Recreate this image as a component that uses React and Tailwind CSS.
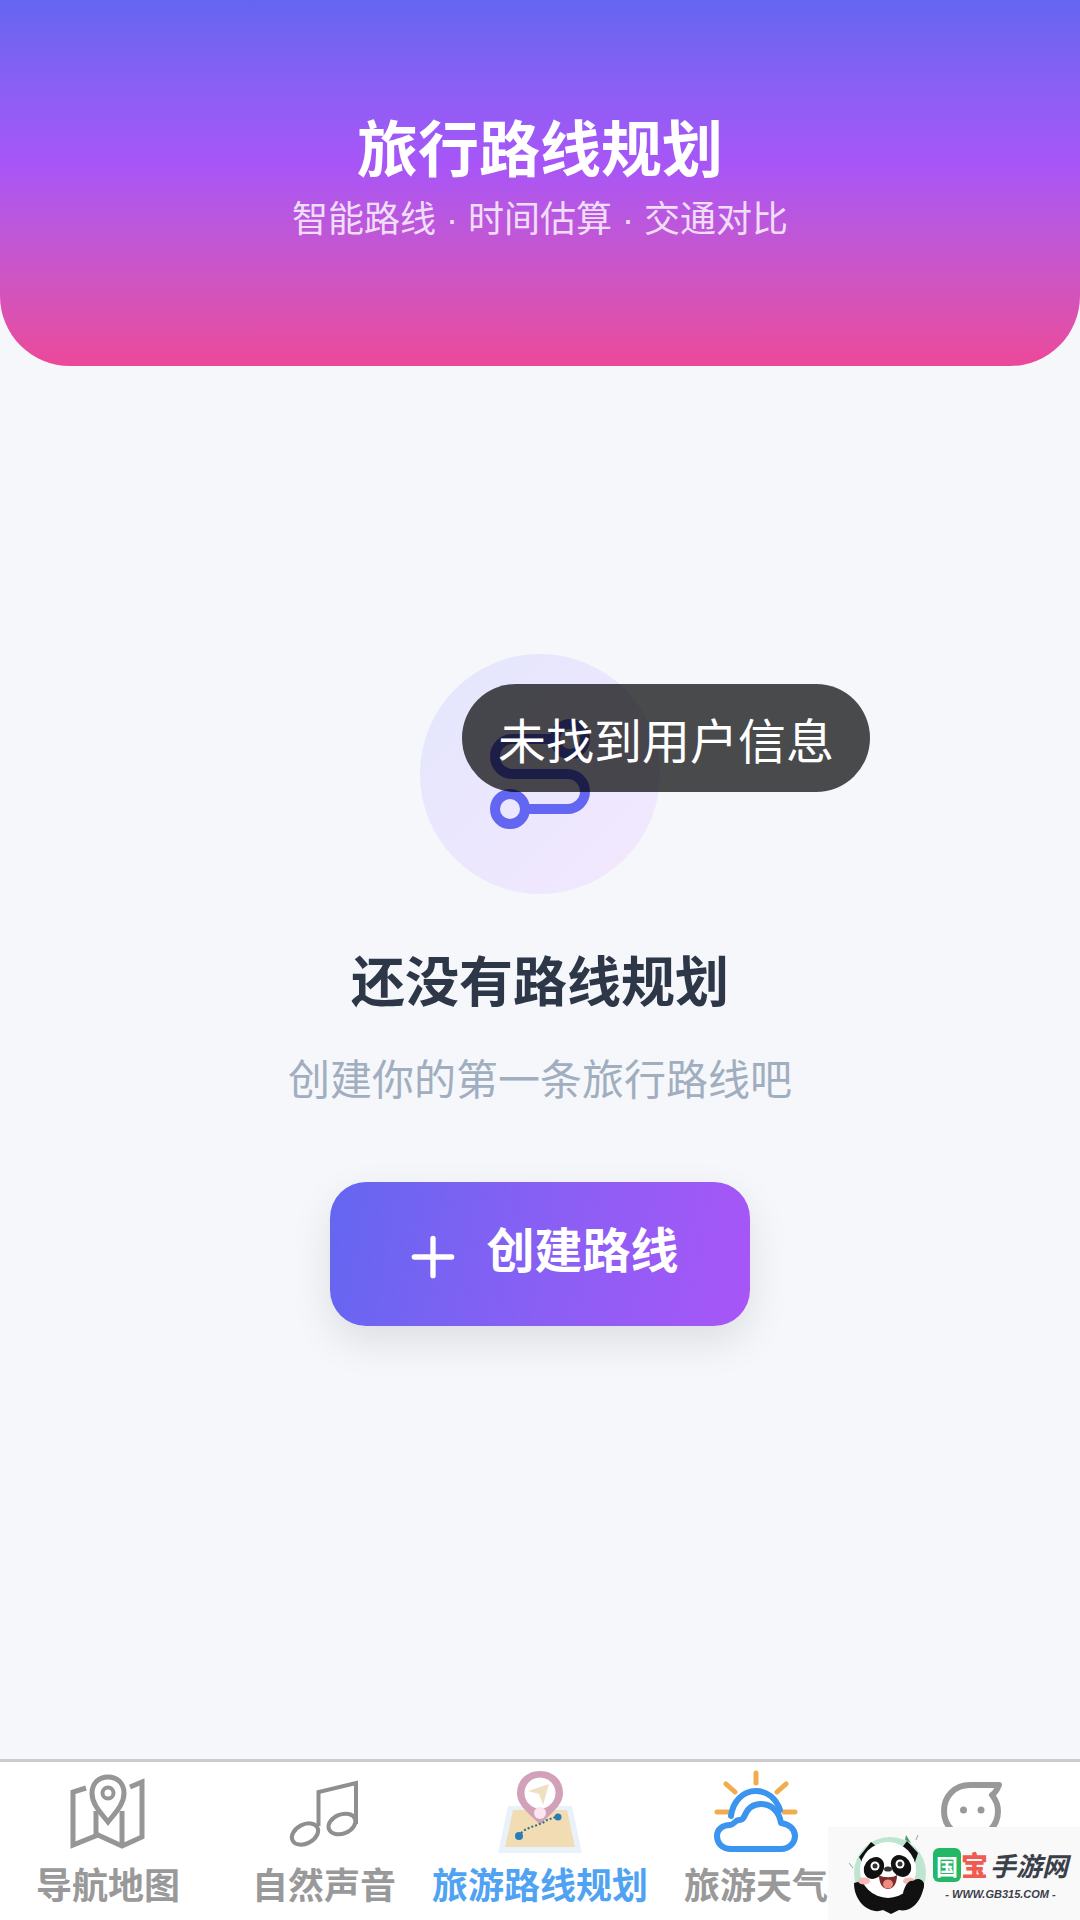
import React from "react";
import { Route, Plus } from "lucide-react";

const MapIcon = () => (
  <svg width="84" height="84" viewBox="0 0 84 84" fill="none" stroke="#969696" strokeWidth="5">
    <path d="M20 18 L7 22 V75 L32 65 L56 76 L76 67 V12 L64 17" />
    <path d="M30 41 V65 M56 41 V76" />
    <path d="M42 52 C34 42 26 34 26 23 C26 13 33 7 42 7 C51 7 58 13 58 23 C58 34 50 42 42 52 Z" />
    <circle cx="42" cy="23" r="5.5" strokeWidth="4" />
  </svg>
);

const MusicIcon = () => (
  <svg width="84" height="84" viewBox="0 0 84 84" fill="none" stroke="#8f8f8f" strokeWidth="4">
    <path d="M36.5 56 V22 L74 13 V54" />
    <ellipse cx="23" cy="64" rx="14" ry="9.5" transform="rotate(-28 23 64)" />
    <ellipse cx="60" cy="54" rx="14" ry="9.5" transform="rotate(-22 60 54)" />
  </svg>
);

const RouteIcon = () => (
  <svg width="84" height="84" viewBox="0 0 84 84" fill="none">
    <path d="M10 36 H74 L84 83 H0 Z" fill="#e9f2fb" />
    <path d="M15 40 H69 L77 77 H7 Z" fill="#f2dcb4" />
    <path d="M42 55 C34 45 19 37 19 23 C19 10 29 1 42 1 C55 1 65 10 65 23 C65 37 50 45 42 55 Z" fill="#d2a0b9" />
    <circle cx="42" cy="23" r="15.5" fill="#ffffff" />
    <path d="M30 21 L51 14 L45 35 L41 24 Z" fill="#efe0c2" />
    <circle cx="42" cy="43" r="6" fill="#fbe6ef" />
    <path d="M23 63 C30 56 42 56 49 50 L58 47" stroke="#2f6f83" strokeWidth="2" strokeDasharray="2 2" />
    <circle cx="21" cy="66" r="4" fill="#2b7eb5" />
    <circle cx="60" cy="47" r="3.5" fill="#2b7eb5" />
  </svg>
);

const WeatherIcon = () => (
  <svg width="84" height="84" viewBox="0 0 84 84" fill="none" strokeLinecap="round">
    <path d="M42 3 V13 M12 14 L21 22 M72 14 L63 22 M3 42 H14 M70 42 H81" stroke="#f0ac4f" strokeWidth="5" />
    <path d="M17 46 C19 31 29 21 42 21 C53 21 62 28 66 40" stroke="#3b94ee" strokeWidth="6" />
    <path d="M17 79 C8 79 3 73 3 66 C3 59 9 55 16 55 C20 55 21 50 25 50 C27 50 28 50 30 47 C33 39 39 34 47 34 C57 34 65 41 67 53 C75 54 81 59 81 66 C81 73 75 79 67 79 Z" stroke="#3b94ee" strokeWidth="6" strokeLinejoin="round" fill="#ffffff" />
  </svg>
);

const ChatIcon = () => (
  <svg width="84" height="84" viewBox="0 0 84 84" fill="none">
    <path d="M14 41 C14 26 25 15 40 15 H69 C67 20 65 23 62 25 C66 30 68 35 68 41 C68 56 56 68 41 68 C26 68 14 56 14 41 Z" stroke="#999999" strokeWidth="6" strokeLinejoin="round" />
    <circle cx="33.5" cy="40" r="3.5" fill="#999999" />
    <circle cx="51" cy="40" r="3.5" fill="#999999" />
  </svg>
);

const PandaLogo = () => (
  <svg width="84" height="84" viewBox="0 0 84 84" fill="none">
    <g transform="translate(0 1)">
      <circle cx="41" cy="40" r="36" fill="#bfe5d0" />
      <path d="M5 50 C5 70 22 82 34 77 L42 81 L50 77 C62 80 74 68 75 50 L42 40 Z" fill="#111111" />
      <path d="M10 24 L22 9 L32 17 L16 34 Z" fill="#111111" />
      <path d="M58 8 L69 20 L65 32 L52 16 Z" fill="#111111" />
      <ellipse cx="39" cy="37" rx="28" ry="28" fill="#ffffff" />
      <ellipse cx="25" cy="35" rx="9.5" ry="11.5" transform="rotate(35 25 35)" fill="#111111" />
      <ellipse cx="52" cy="33" rx="9.5" ry="11.5" transform="rotate(-35 52 33)" fill="#111111" />
      <circle cx="26" cy="33" r="4.5" fill="#ffffff" />
      <circle cx="51" cy="31" r="4.5" fill="#ffffff" />
      <circle cx="26" cy="33" r="2.5" fill="#333333" />
      <circle cx="51" cy="31" r="2.5" fill="#333333" />
      <ellipse cx="39" cy="36" rx="4" ry="2.6" fill="#333333" />
      <path d="M30 42 C34 45 44 45 48 42 C48 51 44 56 39 56 C34 56 30 51 30 42 Z" fill="#7a2b2b" />
      <ellipse cx="39" cy="51" rx="5" ry="4.5" fill="#f08a80" />
      <ellipse cx="15" cy="48" rx="6" ry="3.5" fill="#f7b9b4" />
      <ellipse cx="60" cy="48" rx="6" ry="3.5" fill="#f7b9b4" />
      <path d="M54 60 C56 52 60 47 64 48 C68 44 75 46 75 52 C75 60 66 68 58 66 Z" fill="#111111" />
      <path d="M57 2 L62 10 L56 7 Z" fill="#4e9b6d" />
      <path d="M0 30 L4 35 M69 2 L67 7" stroke="#7fb596" strokeWidth="1" />
    </g>
  </svg>
);

const Tab = ({ icon, label, active }) => (
  <div className="w-[216px] flex flex-col items-center">
    {icon}
    <span className={`h-[54px] mt-[2px] text-[36px] leading-[54px] font-bold whitespace-nowrap ${active ? "text-[#4fa3f2]" : "text-[#999999]"}`}>
      {label}
    </span>
  </div>
);

export default function App() {
  return (
    <div
      className="relative w-[1080px] h-[1920px] overflow-hidden flex flex-col bg-[#f5f7fb]"
      style={{ fontFamily: '"Noto Sans CJK SC", "Noto Sans", sans-serif' }}
    >
      <header className="h-[366px] shrink-0 rounded-b-[70px] bg-linear-to-b from-[#6366f1] via-[#a855f7] via-45% to-[#ec4899] flex flex-col items-center pt-[108px] text-white">
        <h1 className="text-[61px] leading-[76px] font-bold">旅行路线规划</h1>
        <p
          className="text-[36px] leading-[54px] mt-[9px] opacity-80"
          style={{ fontFamily: '"Liberation Sans", "Noto Sans CJK SC", sans-serif' }}
        >
          智能路线 · 时间估算 · 交通对比
        </p>
      </header>

      <main className="flex-1 flex flex-col items-center pt-[288px]">
        <div className="w-[240px] h-[240px] rounded-full bg-linear-to-br from-[#e3e6fd] to-[#f3e8fe] flex items-center justify-center">
          <Route size={120} strokeWidth={2} color="#6366f1" />
        </div>
        <h2 className="mt-[45px] text-[54px] leading-[80px] font-bold text-[#2d3748]">还没有路线规划</h2>
        <p className="mt-[28px] text-[42px] leading-[60px] text-[#a0aec0]">创建你的第一条旅行路线吧</p>
        <button className="mt-[75px] w-[420px] h-[144px] rounded-[36px] bg-linear-100 from-[#6366f1] to-[#a855f7] shadow-[0_16px_40px_rgba(0,0,0,0.1)] flex items-center justify-center text-white">
          <Plus size={64} strokeWidth={2} className="mr-[21px] mt-[6px]" />
          <span className="text-[48px] leading-[60px] font-bold -mt-[14px]">创建路线</span>
        </button>
      </main>

      <nav className="h-[161px] shrink-0 border-t-[3px] border-[#cccccc] bg-white flex pt-[8px]">
        <Tab icon={<MapIcon />} label="导航地图" />
        <Tab icon={<MusicIcon />} label="自然声音" />
        <Tab icon={<RouteIcon />} label="旅游路线规划" active />
        <Tab icon={<WeatherIcon />} label="旅游天气" />
        <Tab icon={<ChatIcon />} label="" />
      </nav>

      <div className="absolute right-0 bottom-0 w-[252px] h-[93px] bg-[#f9f9f9] flex items-center pl-[21px]">
        <PandaLogo />
        <div className="flex flex-col items-center">
          <div className="flex items-center h-[40px]">
            <span className="w-[28px] h-[34px] rounded-[6px] bg-[#22b866] text-white text-[22px] leading-[34px] font-bold text-center">国</span>
            <span className="w-[27px] text-[#f05a4f] text-[27px] leading-[34px] font-black text-center">宝</span>
            <span className="ml-[2px] text-[#3b3f4a] text-[26px] leading-[34px] font-bold italic whitespace-nowrap">手游网</span>
          </div>
          <span className="mt-[1px] text-[#3b3f4a] text-[11px] leading-[16px] font-bold italic whitespace-nowrap" style={{ fontFamily: '"Liberation Sans", sans-serif' }}>- WWW.GB315.COM -</span>
        </div>
      </div>

      <div className="absolute left-[462px] top-[684px] h-[108px] px-[36px] rounded-[54px] bg-black/70 text-white text-[48px] leading-[108px] whitespace-nowrap">
        未找到用户信息
      </div>
    </div>
  );
}
